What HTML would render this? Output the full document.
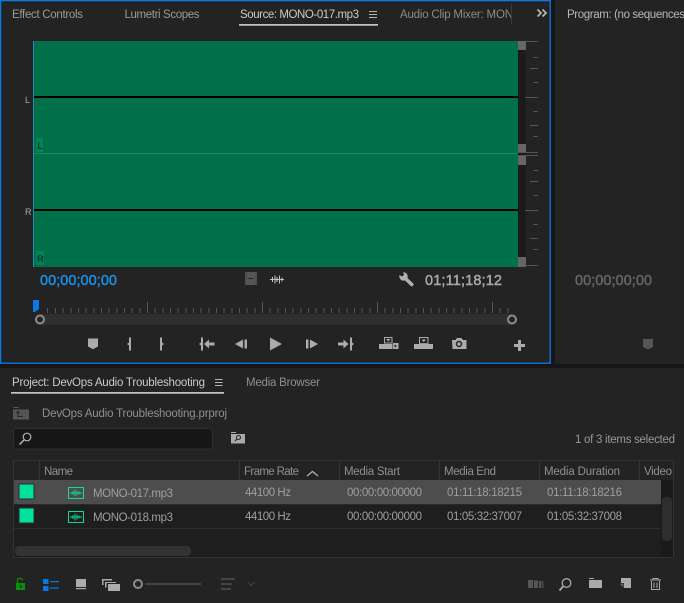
<!DOCTYPE html>
<html><head><meta charset="utf-8"><style>
html,body{margin:0;padding:0;background:#151515;width:684px;height:603px;overflow:hidden}
svg{display:block}
text{font-family:"Liberation Sans",sans-serif;font-size:11.5px;fill:#9a9a9a;white-space:pre}
.tc{font-size:14.500px;stroke-width:.45px}
</style></head><body>
<svg width="684" height="603" viewBox="0 0 684 603" xmlns="http://www.w3.org/2000/svg">
<rect width="684" height="603" fill="#161616"/>
<!-- panels -->
<rect x="0" y="0" width="551" height="364" fill="#232323"/>
<rect x="555" y="0" width="129" height="364" fill="#232323"/>
<rect x="0" y="368" width="684" height="235" fill="#232323"/>
<rect x="0.6" y="0.6" width="549.6" height="362.6" fill="none" stroke="#0a78e6" stroke-width="1.3"/>
<!-- tabs -->
<text x="12" y="18" textLength="71">Effect Controls</text>
<text x="124.500" y="18" textLength="75">Lumetri Scopes</text>
<text x="240" y="18" textLength="119" style="fill:#c9c9c9">Source: MONO-017.mp3</text>
<rect x="239" y="24" width="139" height="1.700" fill="#c4c4c4"/>
<path d="M369 11.500h8M369 14.500h8M369 17.500h8" stroke="#b5b5b5" stroke-width="1"/>
<svg x="400" y="0" width="111" height="30"><text x="0" y="18" textLength="113" style="fill:#8a8a8a">Audio Clip Mixer: MON</text></svg>
<rect x="511" y="4" width="1" height="20" fill="#3a3a3a"/>
<path d="M537.500 9.500l3.500 3.500-3.500 3.500M542.500 9.500l3.500 3.500-3.500 3.500" fill="none" stroke="#b5b5b5" stroke-width="1.800"/>
<text x="567" y="18" textLength="118" style="fill:#b8b8b8">Program: (no sequences</text>
<!-- waveform -->
<rect x="33" y="41" width="485" height="226" fill="#00704a"/>
<rect x="33" y="41" width="1" height="226" fill="#1a8fb8"/>
<rect x="34" y="96" width="484" height="2" fill="#000"/>
<rect x="34" y="209" width="484" height="2" fill="#000"/>
<rect x="34" y="153" width="484" height="1" fill="#1e8a62"/>
<rect x="518" y="41" width="7.500" height="226" fill="#1a1a1a"/>
<rect x="518" y="41" width="8" height="9" fill="#666"/>
<rect x="518" y="144" width="8" height="9" fill="#666"/>
<rect x="518" y="155" width="8" height="10" fill="#666"/>
<rect x="518" y="257" width="8" height="10" fill="#666"/>
<g fill="#555">
<rect x="525" y="41" width="13" height="1"/><rect x="533" y="57" width="5" height="1"/><rect x="530" y="68" width="8" height="1"/><rect x="533" y="82" width="5" height="1"/><rect x="525" y="97" width="13" height="1"/><rect x="533" y="111" width="5" height="1"/><rect x="530" y="125" width="8" height="1"/><rect x="533" y="136" width="5" height="1"/><rect x="518" y="152" width="20" height="1"/><rect x="518" y="155" width="20" height="1"/>
<rect x="533" y="170" width="5" height="1"/><rect x="530" y="181" width="8" height="1"/><rect x="533" y="195" width="5" height="1"/><rect x="525" y="210" width="13" height="1"/><rect x="533" y="224" width="5" height="1"/><rect x="530" y="238" width="8" height="1"/><rect x="533" y="249" width="5" height="1"/><rect x="525" y="265" width="13" height="1"/>
</g>
<text x="25" y="103" style="font-size:9px;fill:#aaa">L</text>
<text x="25" y="215" style="font-size:9px;fill:#aaa">R</text>
<rect x="36" y="138" width="7" height="14" fill="#008359"/>
<rect x="36" y="251" width="8" height="14" fill="#008359"/>
<text x="37.500" y="149" style="font-size:9.500px;fill:#041a12">L</text>
<text x="37" y="262" style="font-size:9.500px;fill:#041a12">R</text>
<!-- timecode -->
<text class="tc" x="40" y="285" textLength="77" style="fill:#1c8fe6;stroke:#1c8fe6">00;00;00;00</text>
<text class="tc" x="425" y="285" textLength="77" style="fill:#a8a8a8;stroke:#a8a8a8">01;11;18;12</text>
<text class="tc" x="575" y="285" textLength="77" style="fill:#666;stroke:#666">00;00;00;00</text>
<rect x="245" y="272" width="12" height="13" fill="#555"/>
<path d="M248.500 278.500h5" stroke="#232323"/>
<path d="M246 273v11M256 273v11" stroke="#3a3a3a" stroke-width="1" stroke-dasharray="1 1"/>
<path d="M270 279.500h14M272.500 277v5M275 275.500v8M277 277v5M279.500 275.500v8M282 277.500v4" stroke="#c4c4c4" stroke-width="1" fill="none"/>
<path d="M404.500 277.500l7.200 7" stroke="#b0b0b0" stroke-width="3.600" stroke-linecap="round"/>
<circle cx="403.500" cy="276.500" r="4.200" fill="#b0b0b0"/>
<path d="M399 271.500l4 0 1 3.500-2 1.500-3.500-2z" fill="#232323"/>
<!-- ruler -->
<g id="ticks" stroke="#555" stroke-width="1">
<path d="M47.500 308v5M55.500 308v5M63 308v5M71 308v5M78.500 308v5M86 308v5M94 308v5M101.500 308v5M109 308v5M117 308v5M124.500 308v5M132 308v5M140 308v5M147.500 302v11M155 308v5M163 308v5M170.500 308v5M178 308v5M186 308v5M193.500 308v5M201 308v5M209 308v5M216.500 308v5M224 308v5M232 308v5M239.500 308v5M247 308v5M255 308v5M262.500 302v11M270 308v5M278 308v5M285.500 308v5M293 308v5M301 308v5M308.500 308v5M316 308v5M324 308v5M331.500 308v5M339 308v5M347 308v5M354.500 308v5M362 308v5M370 308v5M377.500 302v11M385 308v5M393 308v5M400.500 308v5M408 308v5M416 308v5M423.500 308v5M431 308v5M439 308v5M446.500 308v5M454 308v5M462 308v5M469.500 308v5M477 308v5M485 308v5M492.500 302v11M500 308v5M508 308v5"/>
</g>
<rect x="40" y="314" width="472" height="11" fill="#2f2f2f"/>
<path d="M33 300h6v9l-4 3h-2z" fill="#0a78e6"/>
<circle cx="40" cy="319.500" r="4" fill="#232323" stroke="#8c8c8c" stroke-width="2"/>
<circle cx="512" cy="319.500" r="4" fill="#232323" stroke="#8c8c8c" stroke-width="2"/>
<!-- transport -->
<g fill="#ababab">
<path d="M88 338.500h10v8l-5 2.800-5-2.800z"/>
<path d="M129 337.500h2v13h-2v-5l-2-1.500 2-1.500z"/>
<path d="M160 337.500h2v5l2 1.500-2 1.500v5h-2z"/>
<path d="M201 337.500h2v13h-2v-5l-2-1.500 2-1.500z"/>
<path d="M204 344l5-4.500v3h5.500v3h-5.500v3z"/>
<path d="M235 344l8-4.500v9z"/><rect x="244.500" y="339.500" width="2.500" height="9"/>
<path d="M270 337.500l12 6.500-12 6.500z"/>
<rect x="306" y="339.500" width="2.500" height="9"/><path d="M310 339.500l8 4.500-8 4.500z"/>
<path d="M338 342.500h5.500v-3l5 4.500-5 4.500v-3h-5.500z"/>
<path d="M350 337.500h2v5l2 1.500-2 1.500v5h-2z"/>
<!-- insert -->
<path d="M384 337h8.500v6.500h-8.500z"/>
<rect x="379" y="344" width="13.500" height="5"/>
<rect x="393" y="343" width="5.500" height="6"/>
<!-- overwrite -->
<rect x="419" y="337" width="9.500" height="7"/>
<rect x="414" y="344" width="19" height="5"/>
<!-- camera -->
<path d="M452 340h3.500l1.500-2h4.500l1.500 2h3.500v9h-14z"/>
<rect x="514" y="344" width="11" height="3"/><rect x="518" y="340" width="3" height="11"/>
</g>
<rect x="385" y="338" width="6.500" height="4.500" fill="#232323"/>
<path d="M386 339h4.500l-2.200 2.500z" fill="#ababab"/>
<path d="M394.500 344.500v3l2.500-1.500z" fill="#232323"/>
<rect x="420" y="338" width="7.500" height="5.200" fill="#232323"/>
<path d="M421.500 339.500h4.500l-2.200 2.500z" fill="#ababab"/>
<circle cx="459" cy="344" r="2.500" fill="#ababab" stroke="#232323" stroke-width="1.500"/>
<path d="M643 339h10v8l-5 2.500-5-2.500z" fill="#555"/>
<!-- project tabs -->
<text x="12" y="386" textLength="193" style="fill:#c9c9c9">Project: DevOps Audio Troubleshooting</text>
<rect x="11" y="392" width="213" height="1.700" fill="#c4c4c4"/>
<path d="M215 379.500h7.500M215 382.500h7.500M215 385.500h7.500" stroke="#b5b5b5"/>
<text x="246" y="386" textLength="74" style="fill:#8f8f8f">Media Browser</text>
<!-- path -->
<path d="M13 407h6v1h-6zM13 409.500h16v10h-16z" fill="#555"/>
<path d="M18 411.500v5h5M16.500 413l1.500-1.500 1.500 1.500" fill="none" stroke="#232323"/>
<text x="42" y="417" textLength="185" style="fill:#8f8f8f">DevOps Audio Troubleshooting.prproj</text>
<!-- search -->
<rect x="13.500" y="428.500" width="199" height="20.500" rx="3" fill="#171717" stroke="#2e2e2e"/>
<circle cx="27" cy="437" r="3.800" fill="none" stroke="#b5b5b5" stroke-width="1.200"/>
<path d="M24 440l-4.500 4.500" stroke="#b5b5b5" stroke-width="1.500"/>
<path d="M231 432h5v1h-5zM231 434h14v9.500h-14z" fill="#a9a9a9"/>
<circle cx="238.500" cy="437.500" r="2" fill="none" stroke="#232323"/><path d="M237 439l-2 2" stroke="#232323"/>
<text x="575" y="443" textLength="100" style="fill:#979797">1 of 3 items selected</text>
<!-- table -->
<rect x="13.500" y="460.500" width="660" height="97" fill="#1e1e1e" stroke="#333"/>
<rect x="14" y="461" width="659" height="19" fill="#232323"/>
<path d="M39.500 461v19M239.500 461v19M339.500 461v19M439.500 461v19M539.500 461v19M639.500 461v19" stroke="#333"/>
<text x="44" y="475" textLength="29" style="fill:#8f8f8f">Name</text>
<text x="244" y="475" textLength="55" style="fill:#8f8f8f">Frame Rate</text>
<path d="M307 476l5.500-4.500 5.500 4.500" fill="none" stroke="#b0b0b0" stroke-width="1.300"/>
<text x="344" y="475" textLength="56" style="fill:#8f8f8f">Media Start</text>
<text x="444" y="475" textLength="52" style="fill:#8f8f8f">Media End</text>
<text x="544" y="475" textLength="76" style="fill:#8f8f8f">Media Duration</text>
<text x="644" y="475" textLength="28" style="fill:#8f8f8f">Video</text>
<rect x="14" y="480" width="647" height="24" fill="#4d4d4d"/>
<rect x="14" y="504" width="647" height="1" fill="#2a2a2a"/>
<rect x="14" y="528" width="647" height="1" fill="#2e2e2e"/>
<rect x="661" y="480" width="12" height="77" fill="#1a1a1a"/>
<rect x="662" y="497" width="10" height="44" rx="4" fill="#2e2e2e"/>
<rect x="15" y="546" width="176" height="10" rx="4" fill="#333"/>
<!-- rows -->
<rect x="19" y="484" width="15" height="15" fill="#00e29b" stroke="#2c2c2c"/>
<rect x="19" y="508" width="15" height="15" fill="#00e29b" stroke="#2c2c2c"/>
<g fill="none" stroke="#10d898" stroke-width="1">
<rect x="68.500" y="487.500" width="15" height="11"/>
<path d="M70 493h12M73 491v4M75 489.500v7M77 490.500v5M79 491.500v3" stroke-width=".9"/>
<rect x="68.500" y="511.500" width="15" height="11"/>
<path d="M70 517h12M73 515v4M75 513.500v7M77 514.500v5M79 515.500v3" stroke-width=".9"/>
</g>
<g>
<text x="93" y="497" textLength="80" style="fill:#9e9e9e">MONO-017.mp3</text>
<text x="245" y="496" textLength="46" style="fill:#9e9e9e">44100 Hz</text>
<text x="347" y="496" textLength="75" style="fill:#9e9e9e">00:00:00:00000</text>
<text x="447" y="496" textLength="75" style="fill:#9e9e9e">01:11:18:18215</text>
<text x="547" y="496" textLength="75" style="fill:#9e9e9e">01:11:18:18216</text>
<text x="93" y="521" textLength="80" style="fill:#9e9e9e">MONO-018.mp3</text>
<text x="245" y="520" textLength="46" style="fill:#9e9e9e">44100 Hz</text>
<text x="347" y="520" textLength="75" style="fill:#9e9e9e">00:00:00:00000</text>
<text x="447" y="520" textLength="75" style="fill:#9e9e9e">01:05:32:37007</text>
<text x="547" y="520" textLength="75" style="fill:#9e9e9e">01:05:32:37008</text>
</g>
<!-- bottom toolbar -->
<path d="M17.500 583v-2.500c0-3 5-3 5 0" fill="none" stroke="#0b8f0b" stroke-width="1.300"/>
<rect x="16" y="583" width="9" height="7" fill="#0b8f0b"/>
<rect x="20" y="585" width="1.500" height="3" fill="#032"/>
<g fill="#0a78e0"><rect x="43" y="579" width="5.500" height="5"/><rect x="43" y="586" width="5.500" height="5"/><rect x="50" y="581" width="9" height="1.200"/><rect x="50" y="587.500" width="9" height="1.200"/></g>
<rect x="76" y="579" width="10" height="8" fill="#aaa"/><rect x="76" y="588" width="10" height="1.200" fill="#aaa"/>
<path d="M102 579h10v1.500h-8.500v4.500h-1.500z M105 582h11v1h-9.500v4.500h-1.500z" fill="#aaa"/>
<rect x="108" y="584" width="12" height="7" fill="#aaa"/>
<circle cx="138" cy="584" r="4" fill="none" stroke="#8c8c8c" stroke-width="2"/>
<rect x="145" y="583" width="56" height="2" fill="#444"/>
<g fill="#444"><rect x="221" y="578" width="14" height="2"/><rect x="221" y="583" width="11" height="2"/><rect x="221" y="588" width="10" height="2"/></g>
<path d="M247.500 582l3.500 3.500 3.500-3.500" fill="none" stroke="#444" stroke-width="1"/>
<g fill="#555"><rect x="528" y="580" width="5" height="8"/><rect x="534" y="580.500" width="4" height="7.500"/><rect x="539" y="581" width="2.500" height="7"/><rect x="542.500" y="581" width="1" height="7"/></g>
<circle cx="566.500" cy="583" r="4.300" fill="none" stroke="#aaa" stroke-width="1.300"/>
<path d="M563 586.500l-3.500 4" stroke="#aaa" stroke-width="1.800"/>
<path d="M589 578h5v1h-5zM589 580h13v8h-13z" fill="#aaa"/>
<path d="M621 578h10v10h-7v-5h-3z" fill="#aaa"/>
<path d="M621 584h2v1h-2zM623 584.500v3" stroke="#777" stroke-width=".8" fill="none"/>
<path d="M650 580h11M653 580v-1.500h5v1.500M651.500 581v8.500h8v-8.500M654 582.500v5.500M657 582.500v5.500" fill="none" stroke="#aaa" stroke-width="1"/>
</svg>
</body></html>
